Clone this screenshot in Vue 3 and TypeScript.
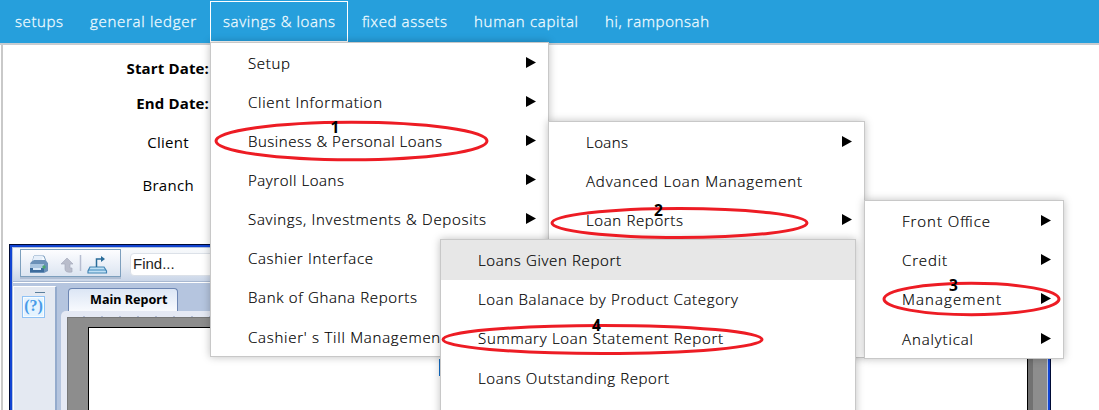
<script setup lang="ts">
interface Entry { label: string; width: number; sub?: boolean; hot?: boolean }
interface Menu { id: string; items: Entry[] }
interface Mark { n: number; cx: number; cy: number; rx: number; ry: number; tx: number; ty: number }

const nav: { label: string; width: number; open?: boolean }[] = [
  { label: 'setups', width: 49 },
  { label: 'general ledger', width: 107 },
  { label: 'savings & loans', width: 113, open: true },
  { label: 'fixed assets', width: 86 },
  { label: 'human capital', width: 105 },
  { label: 'hi, ramponsah', width: 105 },
]

const menus: Menu[] = [
  {
    id: 'first',
    items: [
      { label: 'Setup', width: 43, sub: true },
      { label: 'Client Information', width: 135, sub: true },
      { label: 'Business & Personal Loans', width: 195, sub: true },
      { label: 'Payroll Loans', width: 97, sub: true },
      { label: 'Savings, Investments & Deposits', width: 239, sub: true },
      { label: 'Cashier Interface', width: 126 },
      { label: 'Bank of Ghana Reports', width: 170 },
      { label: "Cashier' s Till Management", width: 199 },
    ],
  },
  {
    id: 'second',
    items: [
      { label: 'Loans', width: 43, sub: true },
      { label: 'Advanced Loan Management', width: 217 },
      { label: 'Loan Reports', width: 98, sub: true },
      { label: '', width: 0 },
      { label: '', width: 0 },
      { label: '', width: 0 },
    ],
  },
  {
    id: 'third',
    items: [
      { label: 'Front Office', width: 89, sub: true },
      { label: 'Credit', width: 46, sub: true },
      { label: 'Management', width: 100, sub: true },
      { label: 'Analytical', width: 72, sub: true },
    ],
  },
  {
    id: 'fourth',
    items: [
      { label: 'Loans Given Report', width: 144, hot: true },
      { label: 'Loan Balanace by Product Category', width: 261 },
      { label: 'Summary Loan Statement Report', width: 246 },
      { label: 'Loans Outstanding Report', width: 192 },
      { label: '', width: 0 },
    ],
  },
]

const marks: Mark[] = [
  { n: 1, cx: 351.5, cy: 141, rx: 135.5, ry: 18.8, tx: 330.5, ty: 132.5 },
  { n: 2, cx: 679.5, cy: 223, rx: 127.5, ry: 14.5, tx: 654, ty: 215.5 },
  { n: 3, cx: 971.5, cy: 299, rx: 87.5, ry: 15.7, tx: 949, ty: 290.5 },
  { n: 4, cx: 602.5, cy: 339.5, rx: 159.5, ry: 14, tx: 592, ty: 330.5 },
]
</script>

<template>
  <div class="page">
    <nav class="bar">
      <div v-for="n in nav" :key="n.label" class="tab" :class="{ open: n.open }">
        <svg class="label" height="24" :width="n.width"><text x="0" y="17" :textLength="n.width - 1" lengthAdjust="spacing">{{ n.label }}</text></svg>
      </div>
    </nav>

    <main class="body">
      <div class="form">
        <b class="date">Start Date:</b>
        <b class="date">End Date:</b>
        <span class="client">Client</span>
        <span class="branch">Branch</span>
      </div>

      <section class="viewer">
        <div class="toolbar">
          <div class="tools">
            <svg width="98" height="26" viewBox="0 0 98 26">
              <path d="M13 6h10l3 8H11z" fill="#f7fbff" stroke="#7d9fc0" />
              <path d="M13 6h9l-2 7h-9z" fill="#e6effa" />
              <path d="M10 12l3-2h11l3 3v8l-4 2H9v-9z" fill="#6b91b8" />
              <path d="M9 14h14v4H9z" fill="#a9c5e0" />
              <path d="M9 18h14v4H9z" fill="#3d6c9d" />
              <path d="M12 19h8" stroke="#d7e8f8" stroke-width="2" />
              <circle cx="23" cy="17" r="1.7" fill="#48a96c" />
              <path d="M46 8l-6 6h4v5q0 4 7 3v-4h-2v-4h3z" fill="#b9bdcb" stroke="#a7acbd" stroke-width=".7" />
              <path d="M59.500 5v16" stroke="#b6bdd0" stroke-width="1.500" />
              <path d="M69 17h14l2.500 4v2H67v-2z" fill="#bfe0f5" stroke="#4385b4" stroke-width="1.200" />
              <path d="M67 20h18" stroke="#3f88bb" />
              <path d="M75.500 17V9h6" fill="none" stroke="#296b99" stroke-width="1.500" />
              <path d="M80 6l4 3-4 3z" fill="#296b99" />
            </svg>
          </div>
          <div class="find">Find...</div>
        </div>
        <div class="work">
          <aside class="side">
            <i class="dash"></i>
            <div class="help">(?)</div>
          </aside>
          <div class="sheet">
            <div class="report-tab">Main Report</div>
            <div class="frame"><div class="canvas"><div class="paper"></div><div class="gutter"></div></div></div>
          </div>
        </div>
      </section>
    </main>

    <i class="sliver"></i>

    <ul v-for="m in menus" :key="m.id" class="menu" :class="m.id">
      <li v-for="(e, i) in m.items" :key="i" :class="{ hot: e.hot }">
        <svg v-if="e.label" class="label" height="24" :width="e.width"><text x="0" y="17" :textLength="e.width - 1" lengthAdjust="spacing">{{ e.label }}</text></svg>
        <svg v-if="e.sub" class="arrow" width="10" height="11"><path d="M0 0L10 5.500L0 11z" /></svg>
      </li>
    </ul>

    <svg class="marks" width="1099" height="410">
      <g v-for="k in marks" :key="k.n">
        <ellipse :cx="k.cx" :cy="k.cy" :rx="k.rx" :ry="k.ry" />
        <text :x="k.tx" :y="k.ty">{{ k.n }}</text>
      </g>
    </svg>
  </div>
</template>

<style>
body { margin: 0; overflow: hidden; }
</style>

<style scoped>
* { box-sizing: border-box; }
.page { position: relative; width: 1099px; height: 410px; overflow: hidden; background: #fff; color: #000; font: 15px "Open Sans", sans-serif; }
.bar { display: flex; height: 45px; padding: 1px 0 0 2px; background: #269fdc; border-bottom: 2px solid #c8ccd0; }
.tab { display: flex; align-items: flex-start; height: 41px; padding: 8px 12px 0; border: 1px solid transparent; }
.tab.open { border-color: #fff; width: 138px; margin-right: 1px; }
.label { display: block; flex: none; overflow: visible; }
.label text { font-size: 15px; font-weight: 300; fill: #000; stroke: #000; stroke-width: 0.200px; }
.bar .label text { fill: #f0fbff; stroke: #f0fbff; stroke-width: 0.300px; }
.body { height: 365px; margin-left: 1px; border-left: 2px solid #c9c9c9; }
.form { display: flex; flex-direction: column; align-items: flex-end; width: 206px; height: 199px; padding-top: 11px; font-size: 15px; line-height: 24px; letter-spacing: 0.3px; }
.date { height: 35px; letter-spacing: 0.150px; }
.client { margin: 4px 20px 0 0; height: 43px; }
.branch { margin-right: 15px; }
.viewer { width: 1042px; height: 180px; margin-left: 6px; background: #b5c5df; border: 1px solid #000b35; border-bottom: 0; box-shadow: inset 0 0 0 2px #1244d2; padding: 3px 3px 0; }
.toolbar { display: flex; height: 35px; background: linear-gradient(#f8fafc, #e6ebf3 55%, #c8d4e7); border-bottom: 1px solid #fff; box-shadow: 0 -1px #a8b8d1 inset; }
.tools { width: 101px; height: 28px; margin: 1px 0 0 7px; border: 1px solid #7d9fbd; background: linear-gradient(#fdfdff, #dce5f1); box-shadow: 0 2px #b0bfd4; }
.find { flex: 1; height: 23px; margin: 5px 0 0 9px; padding-left: 2px; border: 1px solid #dce1e8; border-radius: 4px; background: #fff; font: 15px/20px "Liberation Sans", sans-serif; color: #222; }
.work { display: flex; height: 141px; padding-top: 3px; }
.side { display: flex; flex-direction: column; align-items: center; width: 44px; background: #e4e9f2; border: 1px solid #fff; border-right: 2px solid #94abcd; padding: 5px 2px 0 0; }
.dash { width: 10px; height: 1px; margin-left: 12px; background: #597d9b; }
.help { width: 23px; height: 22px; margin-top: 3px; border: 1px solid #90c2f5; background: #e5f3ff; box-shadow: inset 0 0 0 1px #f7fcff; color: #489be8; font: bold 16px/18px "Liberation Serif", serif; text-align: center; }
.sheet { flex: 1; padding: 2px 0 0 4px; }
.report-tab { width: 110px; height: 23px; margin-left: 7px; padding-left: 21px; border: 1px solid #6d86b3; border-bottom: 0; border-radius: 4px 4px 0 0; background: linear-gradient(#dce6f5, #f8fafe); font: bold 12.600px/22px "Noto Sans", sans-serif; white-space: nowrap; }
.frame { height: 120px; padding: 6px 0 0 6px; border-radius: 5px 0 0; background: repeating-linear-gradient(90deg, #e5e9f4 0 16px, #b5bfd8 16px 18px) 6px 5px / auto 1px repeat-x, #e5e9f4; }
.canvas { display: flex; height: 120px; padding: 9px 0 0 20px; background: #8d8d8d; border: 1px solid #777; border-right: 0; }
.paper { flex: 1; border: 1px solid #000; border-bottom: 0; background: #fff; }
.gutter { width: 19px; border-left: 5px solid #717171; }
.menu { position: absolute; margin: 0; padding: 0; list-style: none; display: flex; flex-direction: column; background: #fff; border: 1px solid #c8c8c8; box-shadow: 0 0 8px rgb(0 0 0 / 25%); }
.menu li { flex: 1; display: flex; align-items: center; justify-content: space-between; padding: 2px 12px 0 37px; }
.first { left: 210px; top: 42px; width: 339px; height: 315px; }
.second { left: 548px; top: 121px; width: 317px; height: 237px; }
.third { left: 864px; top: 200px; width: 200px; height: 159px; }
.fourth { left: 440px; top: 239px; width: 416px; height: 199px; }
.fourth li { flex: 0 0 39px; padding-top: 1px; }
.fourth li:nth-child(4) { flex-basis: 40px; padding-top: 2px; }
.menu li.hot { flex: 0 0 40px; padding-top: 1px; background: #e7e7e7; }
.first li:last-child, .third li:last-child { padding-top: 3px; }
.arrow { display: block; margin-top: -3px; }
.sliver { position: absolute; left: 439px; top: 359px; width: 1px; height: 17px; background: #126fca; }
.marks { position: absolute; left: 0; top: 0; }
.marks ellipse { fill: none; stroke: #ed1c24; stroke-width: 3; }
.marks text { font: bold 15.500px "Open Sans", sans-serif; }
</style>
